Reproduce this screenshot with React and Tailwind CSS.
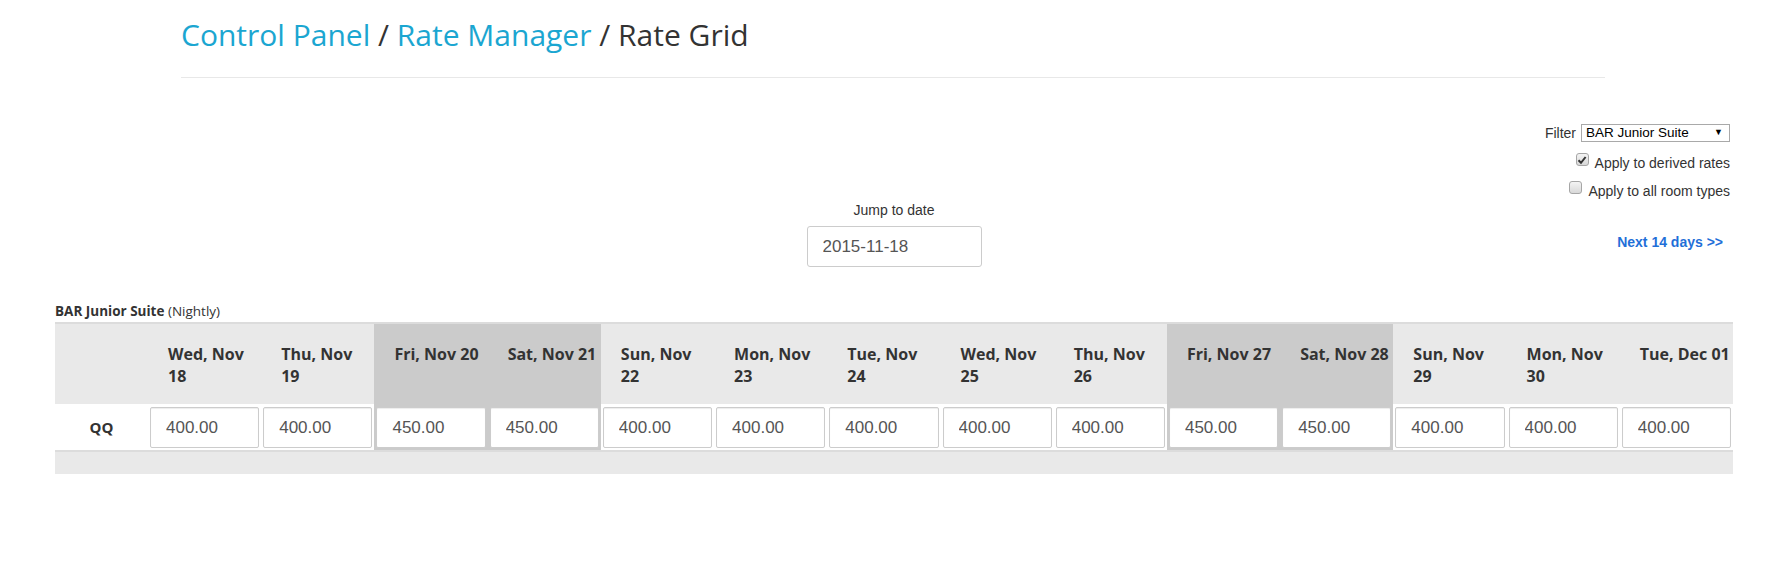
import React from 'react';

const days = [
  { top: 'Wed, Nov', bottom: '18', rate: '400.00' },
  { top: 'Thu, Nov', bottom: '19', rate: '400.00' },
  { top: 'Fri, Nov 20', rate: '450.00', weekend: true },
  { top: 'Sat, Nov 21', rate: '450.00', weekend: true },
  { top: 'Sun, Nov', bottom: '22', rate: '400.00' },
  { top: 'Mon, Nov', bottom: '23', rate: '400.00' },
  { top: 'Tue, Nov', bottom: '24', rate: '400.00' },
  { top: 'Wed, Nov', bottom: '25', rate: '400.00' },
  { top: 'Thu, Nov', bottom: '26', rate: '400.00' },
  { top: 'Fri, Nov 27', rate: '450.00', weekend: true },
  { top: 'Sat, Nov 28', rate: '450.00', weekend: true },
  { top: 'Sun, Nov', bottom: '29', rate: '400.00' },
  { top: 'Mon, Nov', bottom: '30', rate: '400.00' },
  { top: 'Tue, Dec 01', rate: '400.00' },
];

const CheckBox = ({ checked }) => (
  <span className="flex h-[13px] w-[13px] items-center justify-center rounded-[3px] border border-[#a6a6a6] bg-gradient-to-b from-[#f4f4f4] to-[#d8d8d8]">
    {checked && (
      <svg width="10" height="10" viewBox="0 0 10 10">
        <path d="M1.5 5.2 L4 7.8 L8.6 2" fill="none" stroke="#333" strokeWidth="2" />
      </svg>
    )}
  </span>
);

const App = () => {
  return (
    <div className="min-h-[582px] w-full bg-white font-['Liberation_Sans',Arial,sans-serif] text-[#333]">
      {/* breadcrumb */}
      <div className="ml-[181px] w-[1424px] pt-[18px]">
        <h2 className="font-['Open_Sans',sans-serif] text-[30px] leading-[33px] font-normal">
          <span className="text-[#1ba6d1]">Control Panel</span>
          <span> / </span>
          <span className="text-[#1ba6d1]">Rate Manager</span>
          <span> / Rate Grid</span>
        </h2>
        <div className="mt-[26px] border-t border-[#e8e8e8]" />
      </div>

      <div className="ml-[55px] w-[1678px]">
        {/* filters */}
        <div className="mt-[46px] flex flex-col items-end pr-[3px] text-[14px]">
          <div className="flex h-[18px] items-center gap-[5px]">
            <span>Filter</span>
            <div className="flex h-[18px] w-[149px] items-center justify-between border border-[#a9a9a9] pl-[4px] pr-[6px] text-[13.5px] text-black">
              <span>BAR Junior Suite</span>
              <span className="text-[9px]">▼</span>
            </div>
          </div>
          <label className="mt-[11px] flex h-[20px] items-start gap-[6px]">
            <CheckBox checked />
            <span className="leading-[20px]">Apply to derived rates</span>
          </label>
          <label className="mt-[8px] flex h-[20px] items-start gap-[6px]">
            <CheckBox />
            <span className="leading-[20px]">Apply to all room types</span>
          </label>
        </div>

        {/* jump to date */}
        <div className="grid grid-cols-[1fr_auto_1fr]">
          <div />
          <div className="flex flex-col items-center">
            <span className="text-[14px] leading-[18px]">Jump to date</span>
            <input
              readOnly
              value="2015-11-18"
              className="mt-[7px] h-[41px] w-[175px] rounded-[3px] border border-[#ccc] pl-[15px] text-[17px] text-[#555] outline-none"
            />
          </div>
          <div className="flex justify-end pr-[10px] pt-[32px]">
            <a className="text-[14px] font-bold leading-[18px] text-[#1f6fd8]">Next 14 days &gt;&gt;</a>
          </div>
        </div>

        {/* grid */}
        <div className="mt-[35px] font-['Open_Sans',sans-serif] text-[13.5px] leading-[18px]">
          <span className="font-bold">BAR Junior Suite</span> (Nightly)
        </div>
        <div className="mt-[2px] border-t-2 border-[#dcdcdc]">
          <div className="grid grid-cols-[93px_repeat(14,minmax(0,1fr))] font-['Open_Sans',sans-serif]">
            <div className="h-[80px] bg-[#e9e9e9]" />
            {days.map((d, i) => (
              <div
                key={'h' + i}
                className={`h-[80px] pl-[20px] pt-[19px] text-[16px] font-bold leading-[22px] text-[#333] ${d.weekend ? 'bg-[#cbcbcb]' : 'bg-[#e9e9e9]'}`}
              >
                <div className="whitespace-nowrap">{d.top}</div>
                {d.bottom && <div>{d.bottom}</div>}
              </div>
            ))}
            <div className="flex h-[46px] items-center justify-center bg-white text-[15px] font-bold">QQ</div>
            {days.map((d, i) => (
              <div key={'r' + i} className={`h-[46px] px-[2px] pt-[3px] ${d.weekend ? 'bg-[#cbcbcb]' : 'bg-white'}`}>
                <input
                  readOnly
                  value={d.rate}
                  className="h-[41px] w-full rounded-[2px] border border-[#ccc] bg-white pl-[15px] font-['Liberation_Sans',Arial,sans-serif] text-[17px] text-[#555] shadow-[inset_0_1px_1px_rgba(0,0,0,0.075)] outline-none"
                />
              </div>
            ))}
          </div>
          <div className="h-[24px] border-t-2 border-[#dcdcdc] bg-[#e9e9e9]" />
        </div>
      </div>
    </div>
  );
};

export default App;
